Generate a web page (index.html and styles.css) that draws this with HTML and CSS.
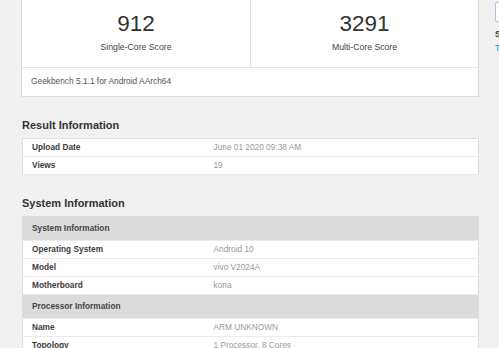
FILE: index.html
```html
<!DOCTYPE html>
<html lang="en">
<head>
    <meta charset="UTF-8">
    <meta name="viewport" content="width=device-width, initial-scale=1.0">
    <title>Geekbench Browser</title>
    <link rel="stylesheet" href="styles.css">
</head>
<body>
    <div class="page">
        <main class="main">
            <div class="card">
                <div class="scores">
                    <div class="score">
                        <div class="score-value">912</div>
                        <div class="score-name">Single-Core Score</div>
                    </div>
                    <div class="score">
                        <div class="score-value">3291</div>
                        <div class="score-name">Multi-Core Score</div>
                    </div>
                </div>
                <div class="card-foot">Geekbench 5.1.1 for Android AArch64</div>
            </div>

            <h2>Result Information</h2>
            <table class="info">
                <colgroup><col class="col-name"><col></colgroup>
                <tbody>
                    <tr><td class="name">Upload Date</td><td class="value">June 01 2020 09:38 AM</td></tr>
                    <tr><td class="name">Views</td><td class="value">19</td></tr>
                </tbody>
            </table>

            <h2>System Information</h2>
            <table class="info">
                <colgroup><col class="col-name"><col></colgroup>
                <tbody>
                    <tr class="section"><th colspan="2">System Information</th></tr>
                    <tr><td class="name">Operating System</td><td class="value">Android 10</td></tr>
                    <tr><td class="name">Model</td><td class="value">vivo V2024A</td></tr>
                    <tr><td class="name">Motherboard</td><td class="value">kona</td></tr>
                    <tr class="section"><th colspan="2">Processor Information</th></tr>
                    <tr><td class="name">Name</td><td class="value">ARM UNKNOWN</td></tr>
                    <tr><td class="name">Topology</td><td class="value">1 Processor, 8 Cores</td></tr>
                </tbody>
            </table>
        </main>

        <aside class="side">
            <div class="side-box"></div>
            <div class="side-title">Share</div>
            <a class="side-link" href="#">Twitter</a>
        </aside>
    </div>
</body>
</html>
```

FILE: styles.css
```css
body {
    margin: 0;
    background-color: #f1f1f1;
    color: #333;
    font-family: "Liberation Sans", Arial, sans-serif;
    overflow: hidden;
}

.page {
    display: flex;
    gap: 16px;
    padding: 0 0 0 21px;
}

.main {
    width: 458px;
    flex-shrink: 0;
}

.card {
    margin-top: -10px;
    background-color: #fff;
    border: 1px solid #dcdcdc;
}

.scores {
    display: grid;
    grid-template-columns: 1fr 1fr;
    border-bottom: 1px solid #e4e4e4;
}

.score {
    text-align: center;
    padding: 19px 0 14px;
}

.score + .score {
    border-left: 1px solid #e4e4e4;
}

.score-value {
    font-size: 22.5px;
    line-height: 28px;
    color: #333;
}

.score-name {
    margin-top: 4px;
    font-size: 8.7px;
    line-height: 11px;
    color: #444;
}

.card-foot {
    padding: 8px 9px 9px;
    font-size: 8.35px;
    line-height: 11px;
    color: #555;
}

h2 {
    margin: 22px 0 6px 1px;
    font-size: 11px;
    line-height: 13px;
    font-weight: bold;
    color: #333;
}

.info {
    width: 457px;
    margin-left: 1px;
    border-collapse: collapse;
    table-layout: fixed;
    background-color: #fff;
    border: 1px solid #dcdcdc;
    font-size: 8.3px;
    line-height: 11px;
}

.col-name {
    width: 182px;
}

.info td, .info th {
    padding: 3px 9px;
    border-bottom: 1px solid #ebebeb;
    text-align: left;
    white-space: nowrap;
}

.info .name {
    font-weight: bold;
    color: #3c3c3c;
}

.info .value {
    color: #999;
}

.info .section th {
    padding: 6px 9px;
    background-color: #dcdcdc;
    color: #444;
    font-weight: bold;
}

.side {
    font-size: 8.5px;
    line-height: 11px;
}

.side-box {
    width: 120px;
    height: 18px;
    margin-top: 2px;
    background-color: #fff;
    border: 1px solid #a9c4dc;
    border-radius: 2px;
}

.side-title {
    margin-top: 7px;
    font-weight: bold;
    color: #333;
}

.side-link {
    display: block;
    margin-top: 3px;
    color: #2d8bd0;
    text-decoration: none;
}
```
